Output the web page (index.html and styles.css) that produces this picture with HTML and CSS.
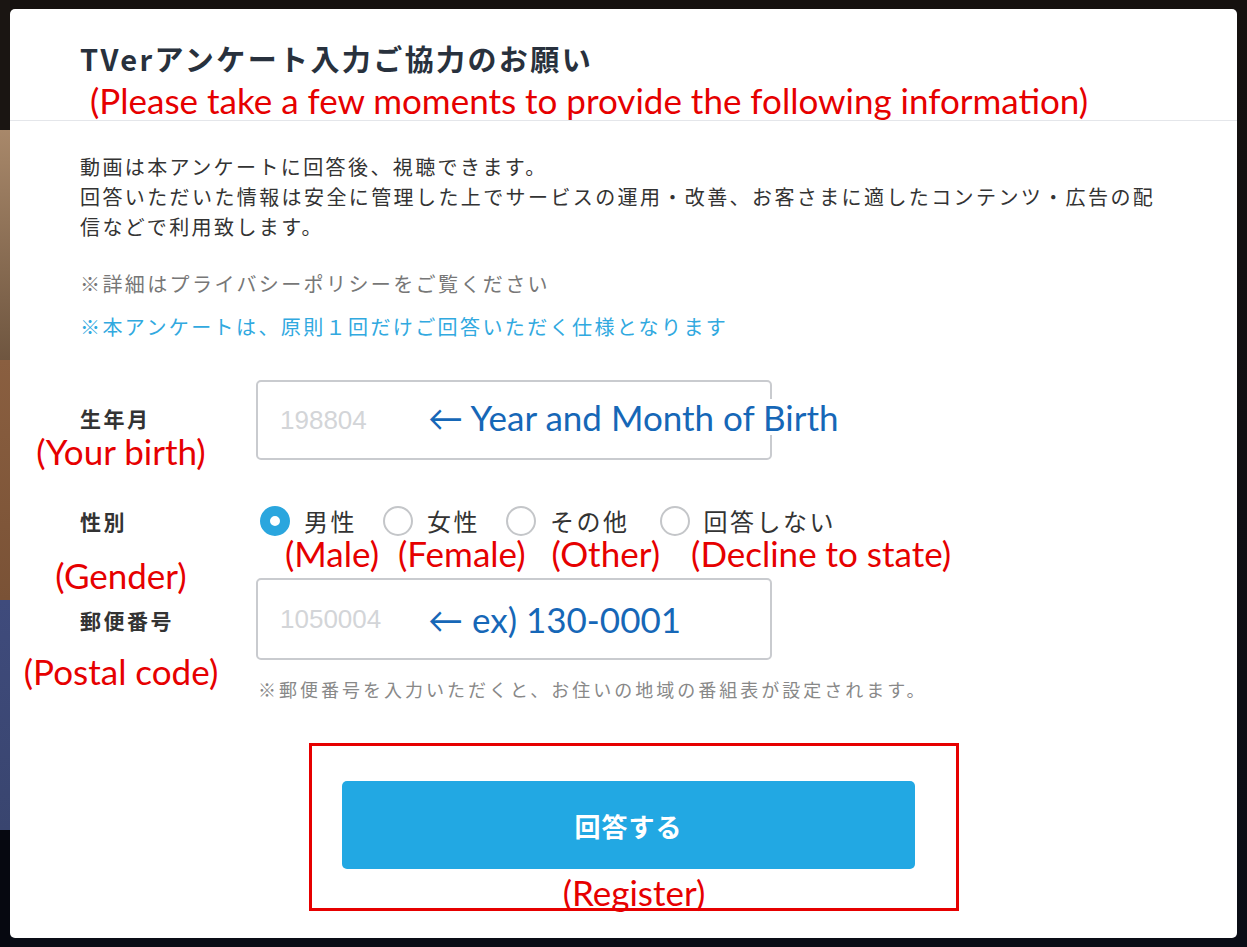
FILE: index.html
```html
<!DOCTYPE html>
<html lang="ja">
<head>
    <meta charset="UTF-8">
    <meta name="viewport" content="width=device-width, initial-scale=1.0">
    <title>TVerアンケート入力ご協力のお願い</title>
    <link rel="stylesheet" href="styles.css">
</head>
<body>
    <div class="backdrop">
        <div class="modal">
            <div class="modal-header">
                <h1 class="title">TVerアンケート入力ご協力のお願い</h1>
                <p class="note-red subtitle">(Please take a few moments to provide the following information)</p>
            </div>

            <div class="modal-body">
                <p class="lead">動画は本アンケートに回答後、視聴できます。<br>回答いただいた情報は安全に管理した上でサービスの運用・改善、お客さまに適したコンテンツ・広告の配信などで利用致します。</p>
                <p class="privacy">※詳細はプライバシーポリシーをご覧ください</p>
                <p class="once">※本アンケートは、原則１回だけご回答いただく仕様となります</p>

                <div class="form">
                    <div class="labels">
                        <div class="label label-birth">生年月</div>
                        <div class="note-red tr-birth">(Your birth)</div>
                        <div class="label label-gender">性別</div>
                        <div class="note-red tr-gender">(Gender)</div>
                        <div class="label label-zip">郵便番号</div>
                        <div class="note-red tr-zip">(Postal code)</div>
                    </div>

                    <div class="fields">
                        <div class="field">
                            <input class="text-input" type="text" placeholder="198804">
                            <span class="note-blue">← Year and Month of Birth</span>
                        </div>

                        <div class="radios">
                            <label class="radio"><span class="dot checked"></span>男性</label>
                            <label class="radio"><span class="dot"></span>女性</label>
                            <label class="radio"><span class="dot"></span>その他</label>
                            <label class="radio"><span class="dot"></span>回答しない</label>
                        </div>
                        <div class="radio-notes">
                            <span class="note-red">(Male)</span>
                            <span class="note-red">(Female)</span>
                            <span class="note-red">(Other)</span>
                            <span class="note-red">(Decline to state)</span>
                        </div>

                        <div class="field field-zip">
                            <input class="text-input" type="text" placeholder="1050004">
                            <span class="note-blue">← ex) 130-0001</span>
                        </div>
                        <p class="zip-help">※郵便番号を入力いただくと、お住いの地域の番組表が設定されます。</p>
                    </div>
                </div>

                <div class="submit-box">
                    <button class="submit" type="button">回答する</button>
                    <div class="note-red tr-submit">(Register)</div>
                </div>
            </div>
        </div>
    </div>
</body>
</html>
```

FILE: styles.css
```css
body {
    margin: 0;
    padding: 0;
    font-family: "Noto Sans CJK JP", "Noto Sans", sans-serif;
    background: #0b0f18;
}
.backdrop {
    padding: 9px 10px;
    height: 929px;
    background:
        linear-gradient(to bottom,
            #1a1512 0, #1a1512 130px,
            #a8886a 130px, #6f5640 360px,
            #8a5f40 360px, #7a5236 600px,
            #3f4b7c 600px, #39456f 830px,
            #060810 830px) left top / 10px 100% no-repeat,
        linear-gradient(to bottom, #15110f 0, #0a0d16 100%);
}
.modal {
    height: 929px;
    background: #fff;
    border-radius: 5px;
    box-sizing: border-box;
}
.modal-header {
    padding: 32px 0 0 70px;
    border-bottom: 1px solid #e4e6ea;
    height: 112px;
    box-sizing: border-box;
}
.title {
    margin: 0;
    font-size: 29px;
    line-height: 34px;
    font-weight: bold;
    letter-spacing: 2.4px;
    color: #28313d;
}
.note-red {
    font-family: Lato, "Open Sans", sans-serif;
    color: #e60000;
    font-size: 35px;
    line-height: 36px;
    white-space: nowrap;
}
.note-blue {
    font-family: Lato, "Open Sans", sans-serif;
    color: #1667b7;
    font-size: 35px;
    line-height: 36px;
    white-space: nowrap;
}
.subtitle {
    margin: 7px 0 0 10px;
}
.modal-body {
    padding: 31px 72px 0 70px;
}
.lead, .privacy, .once {
    margin: 0;
    font-size: 20px;
    line-height: 30px;
    letter-spacing: 2.4px;
    color: #333;
}
.privacy {
    margin-top: 27px;
    color: #777;
}
.once {
    margin-top: 13px;
    color: #31a9df;
}

/* form */
.form {
    display: flex;
    margin: 38px 0 0 -70px;
}
.labels {
    width: 246px;
    flex: none;
}
.label {
    margin-left: 70px;
    font-size: 21px;
    line-height: 24px;
    font-weight: bold;
    letter-spacing: 2.5px;
    color: #333;
}
.labels .note-red {
    width: 222px;
    text-align: center;
}
.label-birth { margin-top: 26px; }
.tr-birth { margin-top: 3px; }
.label-gender { margin-top: 40px; }
.tr-gender { margin-top: 24px; }
.label-zip { margin-top: 15px; }
.tr-zip { margin-top: 21px; }

.fields {
    flex: 1;
}
.field {
    position: relative;
    width: 516px;
}
.text-input {
    display: block;
    width: 100%;
    height: 80px;
    box-sizing: border-box;
    border: 2px solid #c9cbcf;
    border-radius: 5px;
    padding: 0 22px;
    font-family: "Liberation Sans", Arial, sans-serif;
    font-size: 26px;
    color: #333;
    outline: none;
}
.text-input::placeholder {
    color: #d3d5d8;
}
.field .note-blue {
    position: absolute;
    left: 172px;
    top: 19px;
    background: #fff;
    padding-right: 6px;
}
.field-zip {
    margin-top: 10px;
}
.field-zip .text-input {
    height: 82px;
}
.field-zip .note-blue {
    top: 23px;
}

.radios {
    display: flex;
    align-items: center;
    margin: 46px 0 0 4px;
    height: 30px;
}
.radio {
    display: flex;
    align-items: center;
    gap: 14px;
    margin-right: 26px;
    font-size: 24px;
    line-height: 28px;
    letter-spacing: 2.5px;
    color: #333;
}
.radio:nth-child(3) {
    margin-right: 30px;
}
.dot {
    width: 30px;
    height: 30px;
    box-sizing: border-box;
    border: 2px solid #c4c6c9;
    border-radius: 50%;
}
.dot.checked {
    border: 10px solid #2aa6de;
}
.radio-notes {
    display: flex;
    margin-top: 2px;
}
.radio-notes .note-red {
    line-height: 30px;
}
.radio-notes .note-red:nth-child(1) { margin-left: 29px; }
.radio-notes .note-red:nth-child(2) { margin-left: 19px; }
.radio-notes .note-red:nth-child(3) { margin-left: 26px; }
.radio-notes .note-red:nth-child(4) { margin-left: 31px; }

.zip-help {
    margin: 19px 0 0 2px;
    font-size: 18px;
    line-height: 20px;
    letter-spacing: 3px;
    color: #888;
}

/* submit */
.submit-box {
    width: 650px;
    height: 168px;
    box-sizing: border-box;
    margin: 44px 0 0 229px;
    border: 3px solid #e60000;
    padding: 35px 0 0 30px;
}
.submit {
    display: block;
    width: 573px;
    height: 88px;
    border: none;
    border-radius: 5px;
    background: #22a8e3;
    color: #fff;
    font-family: "Noto Sans CJK JP", sans-serif;
    font-size: 26px;
    font-weight: bold;
    letter-spacing: 1px;
}
.tr-submit {
    margin: 5px 0 0 -30px;
    text-align: center;
}
```
